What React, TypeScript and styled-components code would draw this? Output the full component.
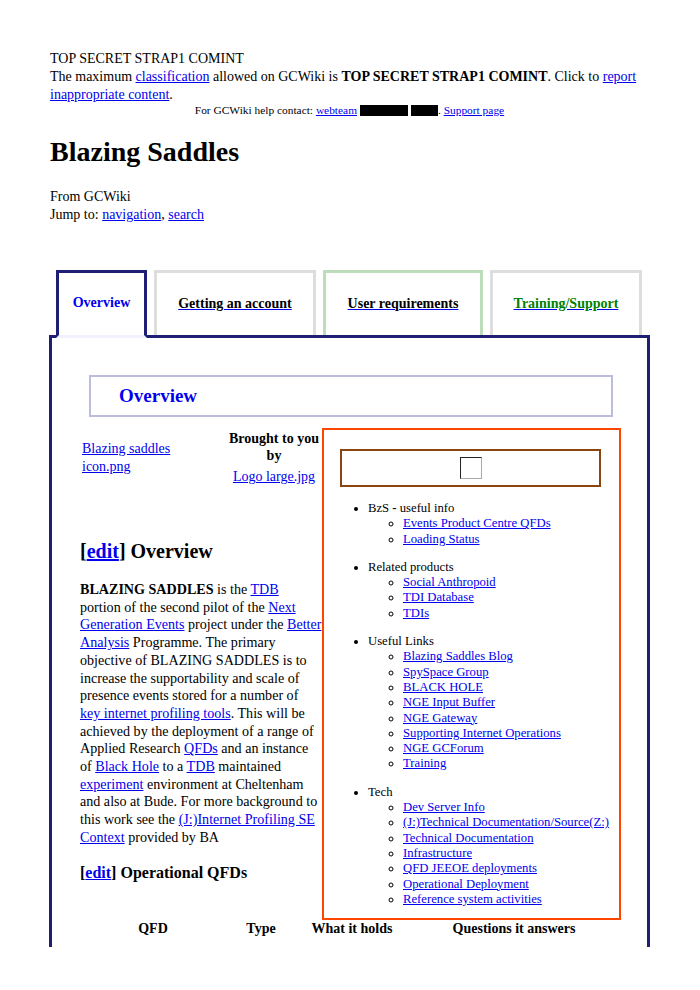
import React from "react";
import styled, { createGlobalStyle } from "styled-components";

const Global = createGlobalStyle`
  html, body { margin: 0; padding: 0; background: #fff; }
  body { font-family: "Liberation Serif", "Times New Roman", serif; font-size: 14px; color: #000; }
  a { color: #0000ee; text-decoration: underline; }
`;

const NAVY = "#1e1e74";

const Viewport = styled.div`
  height: 947px;
  overflow: hidden;
`;

const Page = styled.div`
  padding: 50px 50px 0 49px;
`;

const Notice = styled.div`
  line-height: 18px;
  padding-left: 1px;
`;

const HelpLine = styled.div`
  font-size: 11.4px;
  line-height: 12px;
  text-align: center;
`;

const Redact = styled.span<{ $w: number }>`
  display: inline-block;
  width: ${(p) => p.$w}px;
  height: 11px;
  background: #000;
  vertical-align: -2px;
  margin-left: 3px;
`;

const Title = styled.h1`
  font-size: 28px;
  font-weight: bold;
  margin: 20px 0 0 1px;
  line-height: 32px;
`;

const SiteSub = styled.div`
  line-height: 18px;
  margin: 20px 0 0 1px;
`;

const TabRow = styled.div`
  display: flex;
  align-items: flex-start;
  gap: 7px;
  padding: 0 7px;
  margin-top: 46px;
  position: relative;
  z-index: 2;
`;

const Tab = styled.div<{ $w: number; $border: string; $active?: boolean }>`
  box-sizing: border-box;
  width: ${(p) => p.$w}px;
  height: ${(p) => (p.$active ? 68 : 65)}px;
  margin-bottom: ${(p) => (p.$active ? -3 : 0)}px;
  border: 3px solid ${(p) => p.$border};
  border-bottom: ${(p) => (p.$active ? "3px solid #f2f2ff" : "none")};
  background: #fff;
  display: flex;
  align-items: center;
  justify-content: center;
  padding-bottom: ${(p) => (p.$active ? 3 : 0)}px;
  font-weight: bold;
`;

const TabLink = styled.a<{ $color: string; $plain?: boolean }>`
  color: ${(p) => p.$color};
  text-decoration: ${(p) => (p.$plain ? "none" : "underline")};
  text-decoration-color: #0000ee;
`;

const Panel = styled.div`
  border: 3px solid ${NAVY};
  padding: 37px 26px 0 28px;
  min-height: 700px;
`;

const SectionBox = styled.div`
  border: 2px solid #bcbcdc;
  margin: 0 8px 0 9px;
  height: 38px;
  display: flex;
  align-items: center;
  padding-left: 28px;
  font-size: 19px;
  font-weight: bold;
  color: #0000ee;
`;

const SideBox = styled.div`
  float: right;
  box-sizing: border-box;
  width: 299px;
  margin-top: 11px;
  border: 2px solid #ff4500;
  padding: 19px 0 11px 0;
`;

const ImageFrame = styled.div`
  border: 2px solid #8b4513;
  margin: 0 18px 0 16px;
  height: 34px;
  display: flex;
  align-items: center;
  justify-content: center;
`;

const BrokenImage = styled.span`
  box-sizing: border-box;
  width: 22px;
  height: 22px;
  border-top: 1px solid #222;
  border-left: 1px solid #222;
  border-right: 1px solid #aaa;
  border-bottom: 1px solid #aaa;
`;

const OuterList = styled.ul`
  list-style: disc;
  margin: 14px 0 0 0;
  padding-left: 44px;
  font-size: 12.7px;
  line-height: 15.3px;
`;

const OuterItem = styled.li`
  margin-bottom: 13px;
  &:last-child { margin-bottom: 0; }
`;

const InnerList = styled.ul`
  list-style: circle;
  margin: 0;
  padding-left: 35px;
  white-space: nowrap;
`;

const CreditRow = styled.div`
  display: flex;
  align-items: center;
  justify-content: space-between;
  padding-top: 13px;
`;

const IconLink = styled.a`
  display: block;
  width: 100px;
  margin-left: 2px;
  line-height: 18px;
`;

const Credit = styled.div`
  width: 96px;
  text-align: center;
  line-height: 17px;
`;

const CreditLogo = styled.div`
  margin-top: 4px;
  line-height: 17px;
`;

const H2 = styled.h2`
  font-size: 20px;
  font-weight: bold;
  margin: 54px 0 0 0;
  line-height: 24px;
`;

const H3 = styled.h3`
  font-size: 16px;
  font-weight: bold;
  margin: 16px 0 0 0;
  line-height: 20px;
`;

const Para = styled.p`
  font-size: 14.1px;
  line-height: 17.7px;
  margin: 18px 0 0 0;
`;

const QfdTable = styled.table`
  clear: both;
  border-collapse: collapse;
  width: 540px;
  margin-top: 0;
  th { font-weight: bold; text-align: center; padding: 1px 0 3px; line-height: 15px; }
`;

const Col = styled.col<{ $w: number }>`
  width: ${(p) => p.$w}px;
`;

const groups: { title: React.ReactNode; links: string[] }[] = [
  { title: <><span>BzS</span> <b>-</b> useful info</>, links: ["Events Product Centre QFDs", "Loading Status"] },
  { title: "Related products", links: ["Social Anthropoid", "TDI Database", "TDIs"] },
  {
    title: "Useful Links",
    links: [
      "Blazing Saddles Blog",
      "SpySpace Group",
      "BLACK HOLE",
      "NGE Input Buffer",
      "NGE Gateway",
      "Supporting Internet Operations",
      "NGE GCForum",
      "Training",
    ],
  },
  {
    title: "Tech",
    links: [
      "Dev Server Info",
      "(J:)Technical Documentation/Source(Z:)",
      "Technical Documentation",
      "Infrastructure",
      "QFD JEEOE deployments",
      "Operational Deployment",
      "Reference system activities",
    ],
  },
];

const tabs = [
  { label: "Overview", w: 91, border: NAVY, color: "#0000ee", active: true },
  { label: "Getting an account", w: 162, border: "#dddddd", color: "#000" },
  { label: "User requirements", w: 160, border: "#bcdcbc", color: "#000" },
  { label: "Training/Support", w: 152, border: "#dddddd", color: "#008000" },
];

export default function App() {
  return (
    <Viewport>
      <Global />
      <Page>
        <Notice>
          TOP SECRET STRAP1 COMINT
          <br />
          The maximum <a href="#">classification</a> allowed on GCWiki is <b>TOP SECRET STRAP1 COMINT</b>. Click to{" "}
          <a href="#">report inappropriate content</a>.
        </Notice>
        <HelpLine>
          For GCWiki help contact: <a href="#">webteam</a>
          <Redact $w={48} />
          <Redact $w={27} />. <a href="#">Support page</a>
        </HelpLine>
        <Title>Blazing Saddles</Title>
        <SiteSub>
          From GCWiki
          <br />
          Jump to: <a href="#">navigation</a>, <a href="#">search</a>
        </SiteSub>
        <TabRow>
          {tabs.map((t) => (
            <Tab key={t.label} $w={t.w} $border={t.border} $active={t.active}>
              <TabLink href="#" $color={t.color} $plain={t.active}>
                {t.label}
              </TabLink>
            </Tab>
          ))}
        </TabRow>
        <Panel>
          <SectionBox>Overview</SectionBox>
          <SideBox>
            <ImageFrame>
              <BrokenImage />
            </ImageFrame>
            <OuterList>
              {groups.map((g, i) => (
                <OuterItem key={i}>
                  {g.title}
                  <InnerList>
                    {g.links.map((l) => (
                      <li key={l}>
                        <a href="#">{l}</a>
                      </li>
                    ))}
                  </InnerList>
                </OuterItem>
              ))}
            </OuterList>
          </SideBox>
          <CreditRow>
            <IconLink href="#">Blazing saddles icon.png</IconLink>
            <Credit>
              <b>Brought to you by</b>
              <CreditLogo>
                <a href="#">Logo large.jpg</a>
              </CreditLogo>
            </Credit>
          </CreditRow>
          <H2>
            [<a href="#">edit</a>] Overview
          </H2>
          <Para>
            <b>BLAZING SADDLES</b> is the <a href="#">TDB</a> portion of the second pilot of the{" "}
            <a href="#">Next Generation Events</a> project under the <a href="#">Better Analysis</a> Programme. The
            primary objective of BLAZING SADDLES is to increase the supportability and scale of presence events stored
            for a number of <a href="#">key internet profiling tools</a>. This will be achieved by the deployment of a
            range of Applied Research <a href="#">QFDs</a> and an instance of <a href="#">Black Hole</a> to a{" "}
            <a href="#">TDB</a> maintained <a href="#">experiment</a> environment at Cheltenham and also at Bude. For
            more background to this work see the <a href="#">(J:)Internet Profiling SE Context</a> provided by BA
          </Para>
          <H3>
            [<a href="#">edit</a>] Operational QFDs
          </H3>
          <QfdTable>
            <colgroup>
              <Col $w={146} />
              <Col $w={70} />
              <Col $w={112} />
              <Col $w={212} />
            </colgroup>
            <thead>
              <tr>
                <th>QFD</th>
                <th>Type</th>
                <th>What it holds</th>
                <th>Questions it answers</th>
              </tr>
            </thead>
          </QfdTable>
        </Panel>
      </Page>
    </Viewport>
  );
}
